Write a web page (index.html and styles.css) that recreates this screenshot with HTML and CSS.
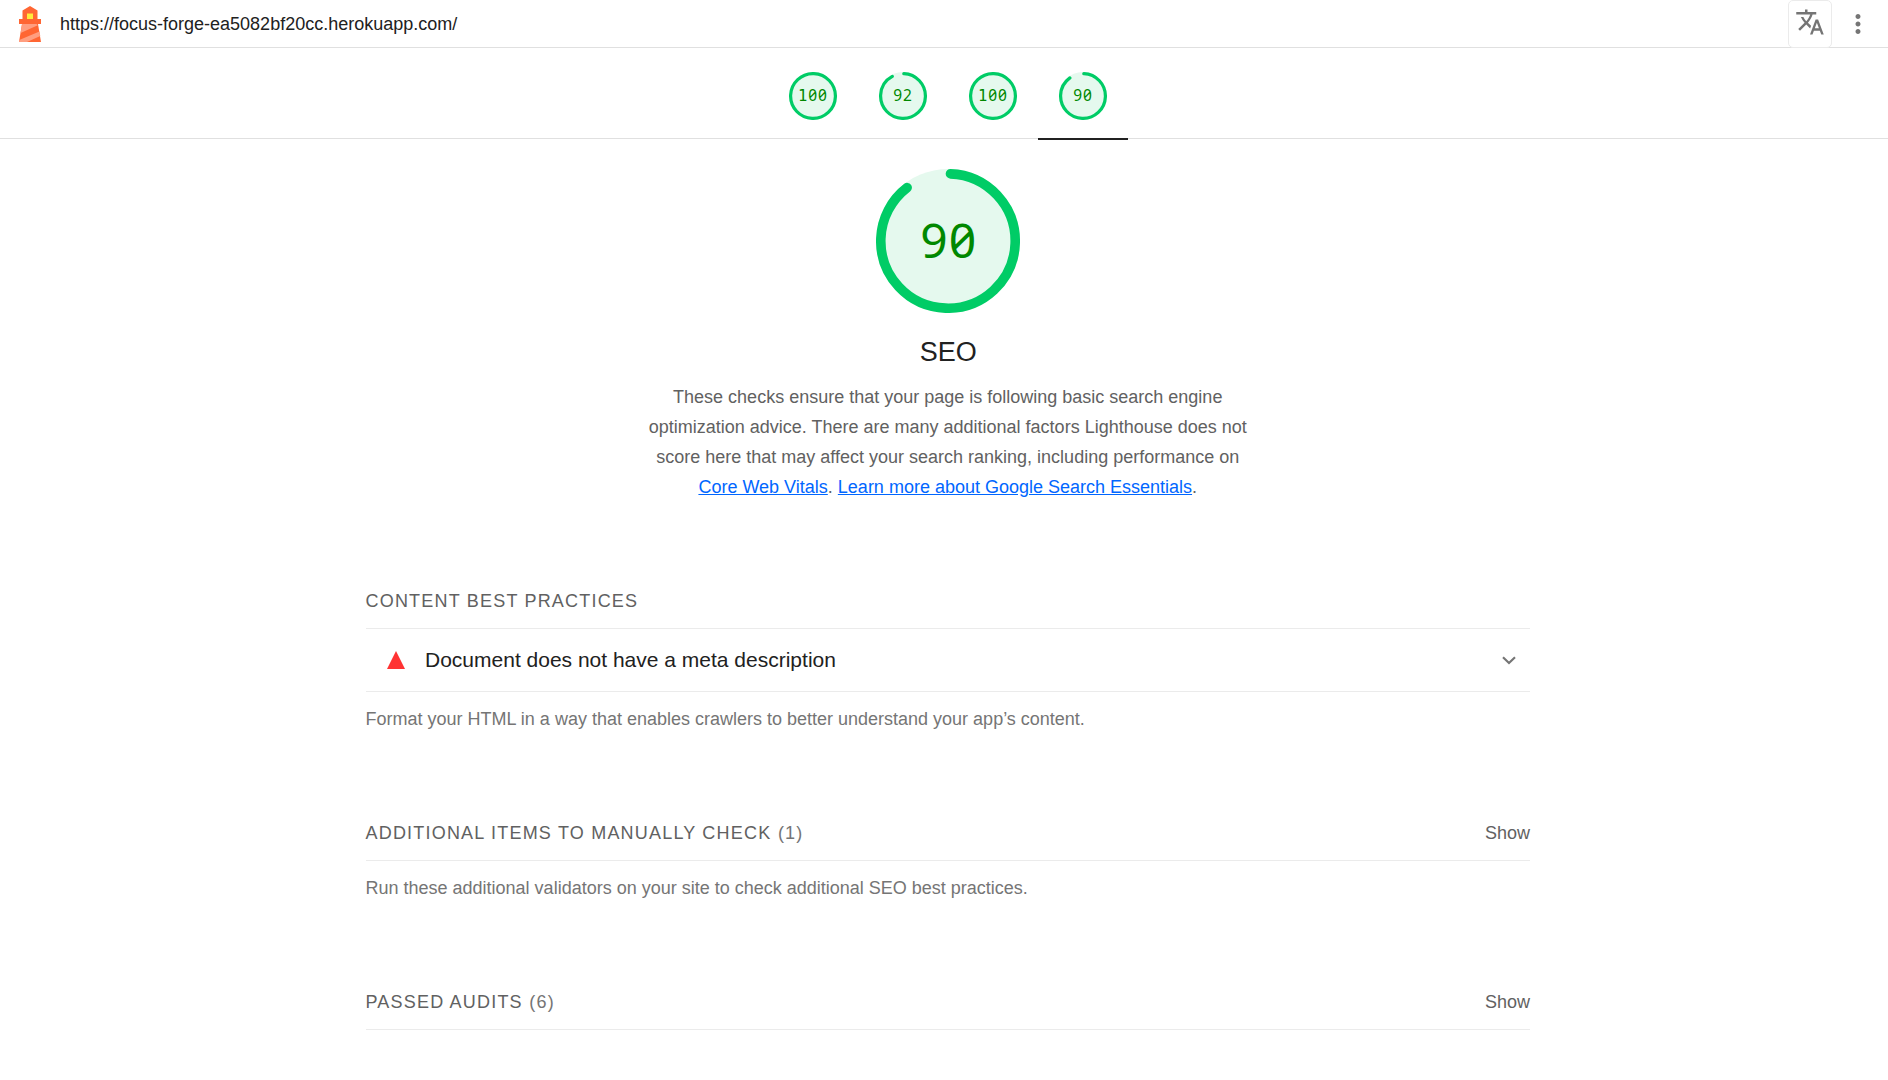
FILE: index.html
```
<!DOCTYPE html>
<html lang="en">
<head>
<meta charset="utf-8">
<title>Lighthouse Report</title>
<link rel="stylesheet" href="styles.css">
</head>
<body>
<header class="topbar">
  <svg class="logo" viewBox="0 0 24 36">
    <path fill="#ff6633" d="M12 0l7.500 4.500v8.500H23v5h-3l3 18H1l3-18H1v-5h3.500V4.500z"/>
    <path fill="#ff9e80" d="M4 18h14.500l1.300 1.300L2.600 27zM21.400 25.500l.9 4.500L9 36H1l.3-2z"/>
    <path fill="#ffeb3b" d="M9 7.500h6v5.500H9z"/>
  </svg>
  <span class="url">https://focus-forge-ea5082bf20cc.herokuapp.com/</span>
  <button class="translate" aria-label="Translate">
    <svg viewBox="0 0 24 24"><path d="M12.870 15.070l-2.540-2.510.03-.03c1.740-1.940 2.980-4.170 3.710-6.530H17V4h-7V2H8v2H1v1.990h11.170C11.500 7.920 10.440 9.750 9 11.350 8.070 10.320 7.300 9.190 6.690 8h-2c.73 1.630 1.730 3.170 2.980 4.560l-5.090 5.020L4 19l5-5 3.110 3.110.76-2.040zM18.500 10h-2L12 22h2l1.120-3h4.750L21 22h2l-4.500-12zm-2.620 7l1.620-4.330L19.120 17h-3.240z"/></svg>
  </button>
  <svg class="more" viewBox="0 0 24 24"><path d="M12 8c1.100 0 2-.9 2-2s-.9-2-2-2-2 .9-2 2 .9 2 2 2zm0 2c-1.100 0-2 .9-2 2s.9 2 2 2 2-.9 2-2-.9-2-2-2zm0 6c-1.100 0-2 .9-2 2s.9 2 2 2 2-.9 2-2-.9-2-2-2z"/></svg>
</header>
<nav class="scores">
  <a class="score"><span class="gauge"><svg viewBox="0 0 120 120"><circle class="disc" cx="60" cy="60" r="60"/><circle class="arc" cx="60" cy="60" r="56"/></svg><span class="value"><span class="one">1</span>00</span></span></a>
  <a class="score"><span class="gauge"><svg viewBox="0 0 120 120"><circle class="disc" cx="60" cy="60" r="60"/><circle class="arc" cx="60" cy="60" r="56" stroke-dasharray="319.700 351.860"/></svg><span class="value">92</span></span></a>
  <a class="score"><span class="gauge"><svg viewBox="0 0 120 120"><circle class="disc" cx="60" cy="60" r="60"/><circle class="arc" cx="60" cy="60" r="56"/></svg><span class="value"><span class="one">1</span>00</span></span></a>
  <a class="score active"><span class="gauge"><svg viewBox="0 0 120 120"><circle class="disc" cx="60" cy="60" r="60"/><circle class="arc" cx="60" cy="60" r="56" stroke-dasharray="312.670 351.860"/></svg><span class="value">90</span></span></a>
</nav>
<main class="report">
  <section class="summary">
    <div class="gauge big"><svg viewBox="0 0 120 120"><circle class="disc" cx="60" cy="60" r="60"/><circle class="arc" cx="60" cy="60" r="56" stroke-dasharray="312.670 351.860"/></svg><span class="value">90</span></div>
    <h1>SEO</h1>
    <p>These checks ensure that your page is following basic search engine optimization advice. There are many additional factors Lighthouse does not score here that may affect your search ranking, including performance on <a href="#">Core Web Vitals</a>. <a href="#">Learn more about Google Search Essentials</a>.</p>
  </section>
  <section class="group">
    <h2>Content Best Practices</h2>
    <div class="audit">
      <span class="fail"></span>
      <span class="title">Document does not have a meta description</span>
      <svg class="chevron" viewBox="0 0 14 9"><path d="M1 1.300l6 5.700 6-5.700"/></svg>
    </div>
    <p>Format your HTML in a way that enables crawlers to better understand your app’s content.</p>
  </section>
  <section class="group">
    <h2>Additional items to manually check <span class="count">(1)</span><span class="show">Show</span></h2>
    <p>Run these additional validators on your site to check additional SEO best practices.</p>
  </section>
  <section class="group">
    <h2>Passed audits <span class="count">(6)</span><span class="show">Show</span></h2>
  </section>
</main>
</body>
</html>
```
FILE: styles.css
```
* { box-sizing: border-box; }
body {
  margin: 0;
  background: #fff;
  color: #212121;
  font: 18px/30px "Liberation Sans", Arial, sans-serif;
  height: 1080px;
  overflow: hidden;
}
.topbar {
  display: flex;
  align-items: center;
  height: 48px;
  padding: 0 15px 0 18px;
  border-bottom: 1px solid #e0e0e0;
}
.logo { width: 24px; height: 36px; }
.url { margin-left: 18px; flex: 1; }
.translate {
  display: flex;
  align-items: center;
  justify-content: center;
  width: 44px;
  height: 48px;
  margin: 0 11px 0 0;
  padding: 0 0 3px;
  background: #fff;
  border: 1px solid #ebebeb;
  border-radius: 5px;
}
.translate svg { width: 30px; height: 30px; flex: none; fill: #757575; }
.more { width: 30px; height: 36px; fill: #757575; }
.scores {
  display: flex;
  justify-content: center;
  height: 91px;
  padding-left: 8px;
  border-bottom: 1px solid #e0e0e0;
}
.score {
  display: flex;
  align-items: center;
  justify-content: center;
  width: 90px;
  height: 92px;
  padding-top: 6px;
  border-bottom: 2px solid transparent;
}
.score.active { border-color: #212121; }
.gauge { display: grid; width: 48px; height: 48px; font-size: 15.5px; }
.gauge > * { grid-area: 1 / 1; }
.gauge svg { width: 100%; height: 100%; }
.disc { fill: #e5f9ee; }
.arc {
  fill: none;
  stroke: #0c6;
  stroke-width: 8;
  stroke-linecap: round;
  transform: rotate(-87.9deg);
  transform-origin: 60px 60px;
}
.value {
  place-self: center;
  color: #080;
  font-family: "Noto Sans", sans-serif;
  font-feature-settings: "zero";
  letter-spacing: .06em;
  line-height: 1;
}
.one { font-family: "DejaVu Sans Mono", monospace; }
.gauge.big { width: 144px; height: 144px; font-size: 48px; }
.big .value { letter-spacing: .02em; padding: 0 0 2px 2px; }
.report { width: 1164.5px; margin: 0 0 0 365.5px; padding-top: 30px; }
.summary { display: flex; flex-direction: column; align-items: center; }
h1 { margin: 21px 0 12px; padding-left: 1px; font-size: 27px; font-weight: 400; line-height: 36px; }
.summary p { width: 600px; margin: 0; text-align: center; color: #616161; }
.summary a { color: #06f; }
.group { padding-top: 84px; }
h2 {
  display: flex;
  height: 43px;
  margin: 0;
  border-bottom: 1px solid #ebebeb;
  color: #616161;
  font-size: 18px;
  font-weight: 400;
  letter-spacing: 1.2px;
  text-transform: uppercase;
}
.count { margin-left: 6.5px; color: #757575; }
.show { margin-left: auto; letter-spacing: 0; text-transform: none; }
.audit {
  display: flex;
  align-items: center;
  height: 63px;
  padding: 0 14px 0 21.5px;
  border-bottom: 1px solid #ebebeb;
}
.fail { width: 18px; height: 18px; background: #f33; clip-path: polygon(50% 0, 100% 100%, 0 100%); }
.title { flex: 1; margin-left: 20px; font-size: 21px; }
.chevron { width: 14px; height: 9px; fill: none; stroke: #757575; stroke-width: 2.200; }
.group p { margin: 12px 0 0; color: #757575; }
```
